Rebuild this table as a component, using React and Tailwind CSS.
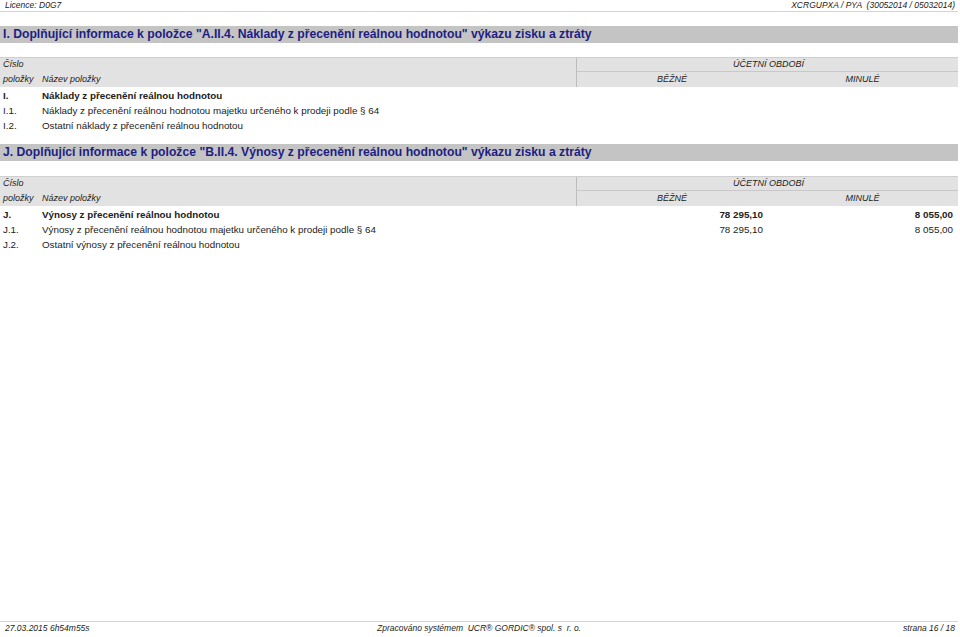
import React from "react";

const F = { fontFamily: '"Liberation Sans", Arial, sans-serif' };

function TitleBar({ children }) {
  return (
    <div className="h-[17px] bg-[#c4c4c4] flex items-center pl-[3px] text-[12.2px] font-bold text-[#1e1e82] leading-none whitespace-nowrap">
      {children}
    </div>
  );
}

function Header() {
  return (
    <div className="grid grid-cols-[577px_190px_1fr] bg-[#e2e2e2] border-t border-[#cfcfcf] text-[9px] italic text-[#222]">
      <div className="row-span-2 border-r border-[#bdbdbd] flex flex-col">
        <div className="h-[14px] flex items-center pl-[3px]">Číslo</div>
        <div className="h-[15px] flex items-center pl-[3px]">
          <span className="w-[39px]">položky</span>
          <span>Název položky</span>
        </div>
      </div>
      <div className="col-span-2 h-[14px] flex items-center justify-center border-b border-[#c8c8c8] pl-[2px]">ÚČETNÍ OBDOBÍ</div>
      <div className="h-[15px] flex items-center justify-center">BĚŽNÉ</div>
      <div className="h-[15px] flex items-center justify-center">MINULÉ</div>
    </div>
  );
}

function Row({ num, name, a, b, bold }) {
  return (
    <div className={"grid grid-cols-[577px_190px_1fr] h-[15px] pt-[2px] items-center text-[9.8px] text-[#222] " + (bold ? "font-bold" : "")}>
      <div className="flex pl-[3px] whitespace-nowrap">
        <span className="w-[39px]">{num}</span>
        <span>{name}</span>
      </div>
      <div className="text-right pr-[4px]">{a}</div>
      <div className="text-right pr-[5px]">{b}</div>
    </div>
  );
}

export default function App() {
  return (
    <div style={F} className="w-[960px] h-[637px] bg-white flex flex-col overflow-hidden">
      <div className="w-[958px] flex flex-col">
        <div className="h-[12px] border-b border-[#d4d4d4] flex items-center justify-between pl-[5px] pr-[3px] text-[8.5px] italic text-[#222] leading-none">
          <span>Licence: D0G7</span>
          <span>XCRGUPXA / PYA &nbsp;(30052014 / 05032014)</span>
        </div>
        <div className="h-[14px]" />
        <TitleBar>I. Doplňující informace k položce "A.II.4. Náklady z přecenění reálnou hodnotou" výkazu zisku a ztráty</TitleBar>
        <div className="h-[14px]" />
        <Header />
        <Row bold num="I." name="Náklady z přecenění reálnou hodnotou" />
        <Row num="I.1." name="Náklady z přecenění reálnou hodnotou majetku určeného k prodeji podle § 64" />
        <Row num="I.2." name="Ostatní náklady z přecenění reálnou hodnotou" />
        <div className="h-[12px]" />
        <TitleBar>J. Doplňující informace k položce "B.II.4. Výnosy z přecenění reálnou hodnotou" výkazu zisku a ztráty</TitleBar>
        <div className="h-[15px]" />
        <Header />
        <Row bold num="J." name="Výnosy z přecenění reálnou hodnotou" a="78 295,10" b="8 055,00" />
        <Row num="J.1." name="Výnosy z přecenění reálnou hodnotou majetku určeného k prodeji podle § 64" a="78 295,10" b="8 055,00" />
        <Row num="J.2." name="Ostatní výnosy z přecenění reálnou hodnotou" />
      </div>
      <div className="mt-auto mb-[2px] w-[958px] border-t border-[#d4d4d4] h-[14px] flex items-center pl-[5px] pr-[3px] text-[8.5px] italic text-[#222] leading-none">
        <span className="w-[372px]">27.03.2015 6h54m55s</span>
        <span>Zpracováno systémem &nbsp;UCR® GORDIC® spol. s &nbsp;r. o.</span>
        <span className="ml-auto">strana 16 / 18</span>
      </div>
    </div>
  );
}
